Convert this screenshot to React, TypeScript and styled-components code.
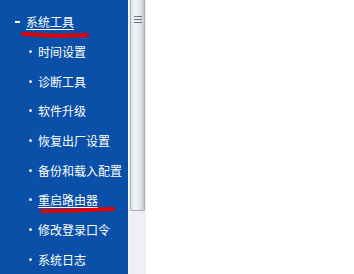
import styled, { createGlobalStyle } from "styled-components";

const GlobalStyle = createGlobalStyle`
  html, body {
    margin: 0;
    padding: 0;
    background: #ffffff;
  }
  body {
    font-family: "Noto Sans CJK SC", "DejaVu Sans", sans-serif;
  }
`;

const Frame = styled.div`
  display: flex;
  width: 354px;
  height: 274px;
  overflow: hidden;
  position: relative;
`;

const Sidebar = styled.nav`
  width: 128px;
  height: 100%;
  background: #0a50a8;
  padding-top: 7px;
  box-sizing: border-box;
  display: flex;
  flex-direction: column;
`;

const GroupRow = styled.div`
  display: flex;
  align-items: center;
  height: 30px;
  padding-left: 15px;
  gap: 6px;
  color: #ffffff;
  font-size: 12px;
`;

const Dash = styled.span`
  width: 5px;
  height: 2px;
  background: #ffffff;
`;

const Item = styled.div<{ $active?: boolean }>`
  display: flex;
  align-items: center;
  height: 30px;
  padding-left: 29px;
  gap: 6px;
  color: #ffffff;
  font-size: 12px;
  white-space: nowrap;
  span {
    text-decoration: ${(p) => (p.$active ? "underline" : "none")};
    text-underline-offset: 2px;
  }
`;

const Label = styled.span<{ $underline?: boolean }>`
  text-decoration: ${(p) => (p.$underline ? "underline" : "none")};
  text-underline-offset: 2px;
`;

const Dot = styled.i`
  width: 3px;
  height: 3px;
  border-radius: 50%;
  background: #dbe6f4;
  flex: none;
`;

const ScrollBar = styled.div`
  width: 18px;
  height: 100%;
  display: flex;
  flex-direction: column;
  background: #eef0f4;
  border-left: 1px solid #f6f7f9;
  box-sizing: border-box;
  padding: 0 1px 0 1px;
`;

const Thumb = styled.div`
  height: 211px;
  border: 1px solid #a9adb5;
  border-top: none;
  border-radius: 0 0 2px 2px;
  background: linear-gradient(
    to right,
    #dfe2e8 0%,
    #f4f5f7 35%,
    #e4e6ea 70%,
    #c4c8cf 100%
  );
  display: flex;
  justify-content: center;
  padding-top: 16px;
  box-sizing: border-box;
`;

const Grip = styled.div`
  width: 8px;
  height: 8px;
  background: repeating-linear-gradient(
    to bottom,
    #6d7178 0px,
    #6d7178 1px,
    transparent 1px,
    transparent 3px
  );
`;

const Content = styled.div`
  flex: 1;
  background: #ffffff;
`;

const Marks = styled.svg`
  position: absolute;
  left: 0;
  top: 0;
  pointer-events: none;
`;

const items = [
  "时间设置",
  "诊断工具",
  "软件升级",
  "恢复出厂设置",
  "备份和载入配置",
  "重启路由器",
  "修改登录口令",
  "系统日志",
];

export default function App() {
  return (
    <>
      <GlobalStyle />
      <Frame>
        <Sidebar>
          <GroupRow>
            <Dash />
            <Label $underline>系统工具</Label>
          </GroupRow>
          {items.map((name) => (
            <Item key={name} $active={name === "重启路由器"}>
              <Dot />
              <span>{name}</span>
            </Item>
          ))}
        </Sidebar>
        <ScrollBar>
          <Thumb>
            <Grip />
          </Thumb>
        </ScrollBar>
        <Content />
        <Marks width="354" height="274" viewBox="0 0 354 274">
          <path
            d="M23 34 Q55 37 87 35"
            stroke="#e00000"
            strokeWidth="4"
            strokeLinecap="round"
            fill="none"
          />
          <path
            d="M42 211 Q78 211 113 209"
            stroke="#e00000"
            strokeWidth="4"
            strokeLinecap="round"
            fill="none"
          />
        </Marks>
      </Frame>
    </>
  );
}
